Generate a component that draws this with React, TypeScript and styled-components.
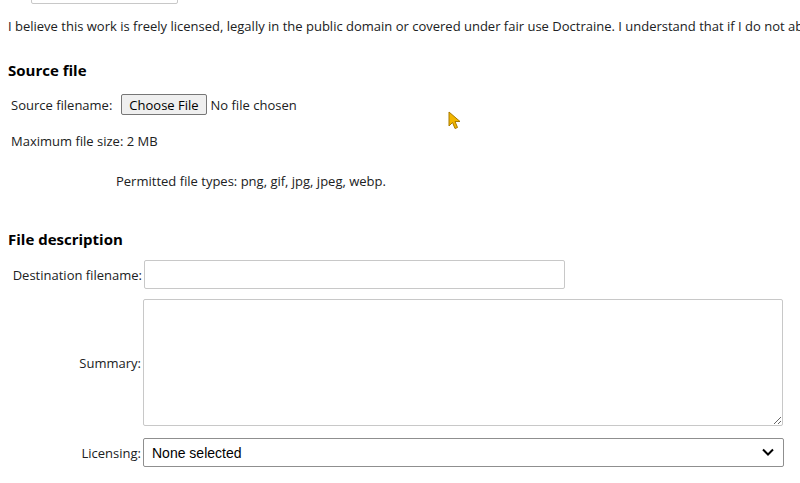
import React from "react";
import styled, { createGlobalStyle } from "styled-components";

const Global = createGlobalStyle`
  html, body {
    margin: 0;
    background: #fff;
    overflow: hidden;
  }
  body {
    font-family: "Open Sans", "Noto Sans", sans-serif;
    font-size: 13px;
    color: #202122;
  }
`;

const Page = styled.div`
  position: relative;
  width: 800px;
  height: 483px;
  padding: 0 8px;
  box-sizing: border-box;
  overflow: hidden;
`;

const TopStub = styled.div`
  width: 145px;
  height: 22px;
  margin: -20px 0 0 23px;
  border: 1px solid #c8c8c8;
  border-radius: 2px;
`;

const Intro = styled.p`
  margin: 13px 0 0;
  line-height: 18px;
  white-space: nowrap;
`;

const Heading = styled.h3<{ $top: number }>`
  margin: ${(p) => p.$top}px 0 0;
  font-size: 15px;
  font-weight: 700;
  line-height: 20px;
  color: #000;
`;

const Row = styled.div<{ $top: number }>`
  display: flex;
  align-items: center;
  margin-top: ${(p) => p.$top}px;
  padding-left: 3px;
`;

const Label = styled.label<{ $width?: number }>`
  flex: none;
  width: ${(p) => (p.$width ? `${p.$width}px` : "auto")};
  text-align: right;
  white-space: nowrap;
  line-height: 18px;
  padding-right: ${(p) => (p.$width ? 2 : 4)}px;
  box-sizing: border-box;
`;

const Note = styled.div<{ $indent?: number; $top: number }>`
  margin-top: ${(p) => p.$top}px;
  padding-left: ${(p) => p.$indent ?? 3}px;
  line-height: 18px;
`;

const FileInput = styled.input`
  font-family: inherit;
  font-size: 13px;
  color: #202122;
  margin-left: 5px;
  &::file-selector-button {
    font-family: "Open Sans", sans-serif;
    font-size: 13px;
    height: 21px;
    padding: 0 7px;
    margin-right: 4px;
    background: #efefef;
    border: 1px solid #767676;
    border-radius: 2px;
    color: #000;
  }
`;

const TextInput = styled.input`
  width: 421px;
  height: 29px;
  box-sizing: border-box;
  border: 1px solid #c8c8c8;
  border-radius: 2px;
  margin: 0;
`;

const TextArea = styled.textarea`
  width: 640px;
  height: 127px;
  box-sizing: border-box;
  border: 1px solid #c8c8c8;
  border-radius: 2px;
  margin: 0;
  resize: both;
`;

const SelectWrap = styled.div`
  position: relative;
  width: 641px;
`;

const Select = styled.select`
  appearance: none;
  width: 100%;
  height: 29px;
  box-sizing: border-box;
  border: 1px solid #8f8f8f;
  border-radius: 2px;
  padding: 0 30px 0 8px;
  font-family: "Liberation Sans", Arial, sans-serif;
  font-size: 14px;
  color: #000;
  background: #fff;
`;

const Chevron = styled.svg`
  position: absolute;
  right: 10px;
  top: 10px;
  pointer-events: none;
`;

const Cursor = styled.svg`
  position: absolute;
  left: 448px;
  top: 111px;
`;

export default function App() {
  return (
    <>
      <Global />
      <Page>
        <TopStub />
        <Intro>
          I believe this work is freely licensed, legally in the public domain or covered under fair use Doctraine. I
          understand that if I do not abide by these terms my upload may be removed.
        </Intro>

        <Heading $top={25}>Source file</Heading>
        <Row $top={14}>
          <Label>Source filename:</Label>
          <FileInput type="file" />
        </Row>
        <Note $top={17}>Maximum file size: 2 MB</Note>
        <Note $top={22} $indent={108}>
          Permitted file types: png, gif, jpg, jpeg, webp.
        </Note>

        <Heading $top={39}>File description</Heading>
        <Row $top={11}>
          <Label $width={133}>Destination filename:</Label>
          <TextInput type="text" />
        </Row>
        <Row $top={10}>
          <Label $width={132}>Summary:</Label>
          <TextArea />
        </Row>
        <Row $top={12}>
          <Label $width={132}>Licensing:</Label>
          <SelectWrap>
            <Select defaultValue="">
              <option value="">None selected</option>
            </Select>
            <Chevron width="12" height="8" viewBox="0 0 12 8">
              <path d="M1 1.5 L6 6.5 L11 1.5" fill="none" stroke="#000" strokeWidth="2" />
            </Chevron>
          </SelectWrap>
        </Row>

        <Cursor width="14" height="20" viewBox="0 0 14 20">
          <path
            d="M1 1 L1 15 L4.5 11.5 L7 17.5 L9.5 16.5 L7 10.5 L12 10.5 Z"
            fill="#f2b600"
            stroke="#a87a00"
            strokeWidth="1"
            strokeLinejoin="round"
          />
        </Cursor>
      </Page>
    </>
  );
}
